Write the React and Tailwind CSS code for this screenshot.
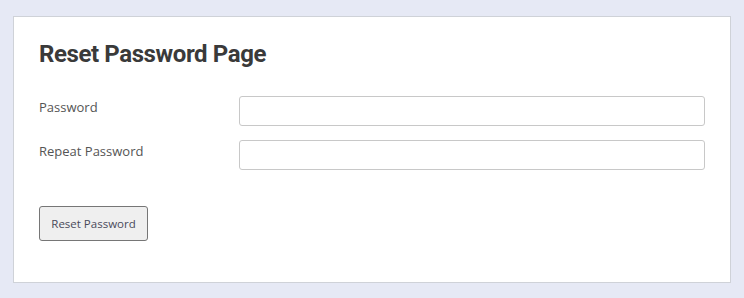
export default function App() {
  return (
    <div className="min-h-[298px] bg-[#e6e9f5] px-[13px] pt-4 pb-[15px]">
      <div className="border border-[#cfd2d8] bg-white px-[25px] pt-[21px] pb-[41px]">
        <h1 className="font-['Roboto',sans-serif] text-[24px] font-bold leading-[32px] text-[#3a3a3a] tracking-[-0.4px]">
          Reset Password Page
        </h1>

        <form className="mt-[26px]" onSubmit={(e) => e.preventDefault()}>
          <div className="flex items-start">
            <label
              htmlFor="password"
              className="w-[200px] pt-[2px] font-['Open_Sans',sans-serif] text-[13px] leading-[18px] text-[#555]"
            >
              Password
            </label>
            <input
              id="password"
              type="password"
              className="h-[30px] w-[467px] rounded-[3px] border border-[#c8c8c8] bg-white"
            />
          </div>
          <div className="mt-[14px] flex items-start">
            <label
              htmlFor="repeat-password"
              className="w-[200px] pt-[2px] font-['Open_Sans',sans-serif] text-[13px] leading-[18px] text-[#555]"
            >
              Repeat Password
            </label>
            <input
              id="repeat-password"
              type="password"
              className="h-[30px] w-[467px] rounded-[3px] border border-[#c8c8c8] bg-white"
            />
          </div>

          <button
            type="submit"
            className="mt-[36px] h-[35px] w-[109px] rounded-[3px] border border-[#767676] bg-[#efefef] pt-[1px] font-['Open_Sans',sans-serif] text-[11.5px] text-[#4a4a5a]"
          >
            Reset Password
          </button>
        </form>
      </div>
    </div>
  )
}
